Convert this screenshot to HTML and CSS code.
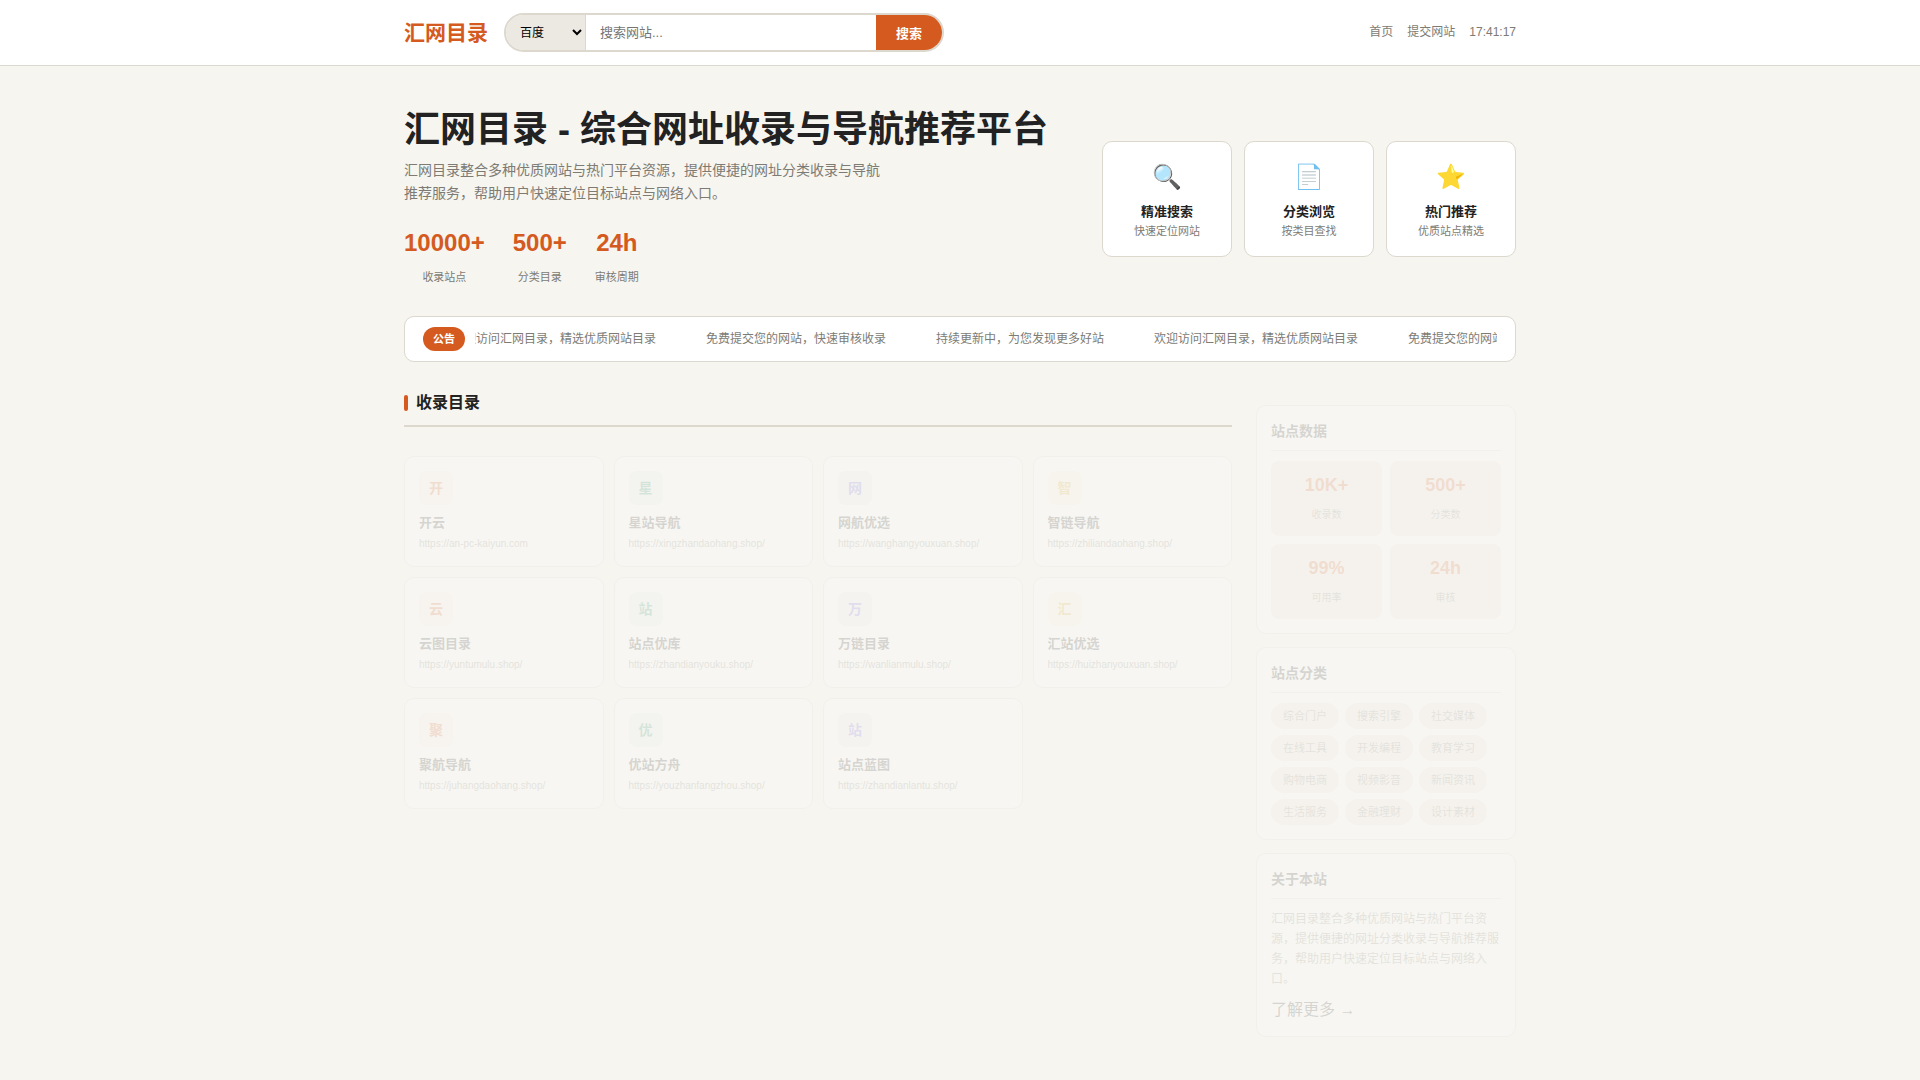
FILE: index.html
```html
<!DOCTYPE html>
<html lang="zh-CN">
<head>
<meta charset="utf-8">
<meta name="viewport" content="width=device-width, initial-scale=1">
<title>汇网目录 - 综合网址收录与导航推荐平台</title>
<link rel="stylesheet" href="styles.css">
</head>
<body>
<header class="site-header">
  <div class="container header-row">
    <a class="logo" href="#">汇网目录</a>
    <form class="search">
      <select class="search-engine" aria-label="搜索引擎">
        <option>百度</option>
        <option>必应</option>
        <option>谷歌</option>
      </select>
      <input class="search-input" type="text" placeholder="搜索网站..." aria-label="搜索网站">
      <button class="search-button" type="submit">搜索</button>
    </form>
    <nav class="top-nav">
      <a href="#">首页</a>
      <a href="#">提交网站</a>
      <span>17:41:17</span>
    </nav>
  </div>
</header>

<main class="container">
  <section class="hero">
    <div class="hero-text">
      <h1>汇网目录 - 综合网址收录与导航推荐平台</h1>
      <p class="hero-desc">汇网目录整合多种优质网站与热门平台资源，提供便捷的网址分类收录与导航推荐服务，帮助用户快速定位目标站点与网络入口。</p>
      <div class="stats">
        <div class="stat"><strong>10000+</strong><span>收录站点</span></div>
        <div class="stat"><strong>500+</strong><span>分类目录</span></div>
        <div class="stat"><strong>24h</strong><span>审核周期</span></div>
      </div>
    </div>
    <div class="features">
      <div class="feature"><span class="feature-icon">🔍</span><h2>精准搜索</h2><p>快速定位网站</p></div>
      <div class="feature"><span class="feature-icon">📄</span><h2>分类浏览</h2><p>按类目查找</p></div>
      <div class="feature"><span class="feature-icon">⭐</span><h2>热门推荐</h2><p>优质站点精选</p></div>
    </div>
  </section>

  <section class="notice">
    <span class="notice-badge">公告</span>
    <div class="notice-window">
      <div class="notice-track">
        <span>欢迎访问汇网目录，精选优质网站目录</span>
        <span>免费提交您的网站，快速审核收录</span>
        <span>持续更新中，为您发现更多好站</span>
        <span>欢迎访问汇网目录，精选优质网站目录</span>
        <span>免费提交您的网站，快速审核收录</span>
      </div>
    </div>
  </section>

  <div class="columns">
    <section class="directory">
      <h2 class="section-title">收录目录</h2>
      <div class="site-grid">
        <a class="site-card" href="#"><span class="site-icon orange">开</span><h3>开云</h3><p>https://an-pc-kaiyun.com</p></a>
        <a class="site-card" href="#"><span class="site-icon green">星</span><h3>星站导航</h3><p>https://xingzhandaohang.shop/</p></a>
        <a class="site-card" href="#"><span class="site-icon purple">网</span><h3>网航优选</h3><p>https://wanghangyouxuan.shop/</p></a>
        <a class="site-card" href="#"><span class="site-icon yellow">智</span><h3>智链导航</h3><p>https://zhiliandaohang.shop/</p></a>
        <a class="site-card" href="#"><span class="site-icon orange">云</span><h3>云图目录</h3><p>https://yuntumulu.shop/</p></a>
        <a class="site-card" href="#"><span class="site-icon green">站</span><h3>站点优库</h3><p>https://zhandianyouku.shop/</p></a>
        <a class="site-card" href="#"><span class="site-icon purple">万</span><h3>万链目录</h3><p>https://wanlianmulu.shop/</p></a>
        <a class="site-card" href="#"><span class="site-icon yellow">汇</span><h3>汇站优选</h3><p>https://huizhanyouxuan.shop/</p></a>
        <a class="site-card" href="#"><span class="site-icon orange">聚</span><h3>聚航导航</h3><p>https://juhangdaohang.shop/</p></a>
        <a class="site-card" href="#"><span class="site-icon green">优</span><h3>优站方舟</h3><p>https://youzhanfangzhou.shop/</p></a>
        <a class="site-card" href="#"><span class="site-icon purple">站</span><h3>站点蓝图</h3><p>https://zhandianlantu.shop/</p></a>
      </div>
    </section>

    <aside class="sidebar">
      <section class="panel">
        <h3 class="panel-title">站点数据</h3>
        <div class="tiles">
          <div class="tile"><strong>10K+</strong><span>收录数</span></div>
          <div class="tile"><strong>500+</strong><span>分类数</span></div>
          <div class="tile"><strong>99%</strong><span>可用率</span></div>
          <div class="tile"><strong>24h</strong><span>审核</span></div>
        </div>
      </section>
      <section class="panel">
        <h3 class="panel-title">站点分类</h3>
        <div class="tags">
          <a href="#">综合门户</a><a href="#">搜索引擎</a><a href="#">社交媒体</a>
          <a href="#">在线工具</a><a href="#">开发编程</a><a href="#">教育学习</a>
          <a href="#">购物电商</a><a href="#">视频影音</a><a href="#">新闻资讯</a>
          <a href="#">生活服务</a><a href="#">金融理财</a><a href="#">设计素材</a>
        </div>
      </section>
      <section class="panel">
        <h3 class="panel-title">关于本站</h3>
        <p class="about">汇网目录整合多种优质网站与热门平台资源，提供便捷的网址分类收录与导航推荐服务，帮助用户快速定位目标站点与网络入口。</p>
        <a class="more" href="#">了解更多 →</a>
      </section>
    </aside>
  </div>
</main>
</body>
</html>
```
FILE: styles.css
```css
:root {
  --bg: #f6f5f0;
  --ink: #222222;
  --muted: #7d7b74;
  --line: #ddd8ce;
  --accent: #d45a20;
  --tint: #f5e6de;
  --faded: 0.15;
}

* {
  box-sizing: border-box;
  margin: 0;
  padding: 0;
}

body {
  background: var(--bg);
  color: var(--ink);
  font-family: "Liberation Sans", "Noto Sans CJK SC", sans-serif;
  font-size: 16px;
  line-height: 26px;
}

a {
  color: inherit;
  text-decoration: none;
}

.container {
  max-width: 1160px;
  margin: 0 auto;
  padding: 0 24px;
}

/* Header */
.site-header {
  background: #ffffff;
  border-bottom: 1px solid var(--line);
}

.header-row {
  display: flex;
  align-items: center;
  gap: 16px;
  padding-top: 13px;
  padding-bottom: 13px;
}

.logo {
  color: var(--accent);
  font-size: 21px;
  font-weight: 700;
}

.search {
  display: flex;
  flex: 0 1 440px;
  height: 39px;
  border: 2px solid var(--line);
  border-radius: 20px;
  overflow: hidden;
}

.search-engine,
.search-input,
.search-button {
  border: 0;
  outline: 0;
  font-family: inherit;
}

.search-engine {
  width: 80px;
  padding: 0 10px;
  border-right: 1px solid var(--line);
  background: #ece9e2;
  color: #000000;
  font-size: 12px;
}

.search-input {
  flex: 1;
  min-width: 0;
  padding: 0 14px;
  background: #ffffff;
  font-size: 13px;
}

.search-button {
  padding: 0 20px;
  background: var(--accent);
  color: #ffffff;
  font-size: 13px;
  font-weight: 700;
}

.top-nav {
  display: flex;
  gap: 14px;
  margin-left: auto;
  color: var(--muted);
  font-size: 12px;
  line-height: 25px;
}

/* Hero */
.hero {
  display: flex;
  align-items: center;
  justify-content: space-between;
  gap: 40px;
  padding: 40px 0 24px;
}

.hero h1 {
  font-size: 36px;
  line-height: 48px;
}

.hero-desc {
  max-width: 480px;
  margin: 5px 0 20px;
  color: var(--muted);
  font-size: 14px;
  line-height: 23px;
}

.stats {
  display: flex;
  gap: 28px;
}

.stat,
.tile {
  display: flex;
  flex-direction: column;
  text-align: center;
}

.stat strong {
  color: var(--accent);
  font-size: 24px;
  line-height: 36px;
}

.stat span {
  margin-top: 1px;
  color: var(--muted);
  font-size: 11px;
  line-height: 30px;
}

.features {
  display: flex;
  gap: 12px;
}

.feature {
  width: 130px;
  padding: 15px 12px;
  border: 1px solid var(--line);
  border-radius: 10px;
  background: #ffffff;
  text-align: center;
}

.feature-icon {
  display: block;
  font-size: 24px;
  line-height: 40px;
}

.feature h2 {
  margin-top: 4px;
  font-size: 13px;
  line-height: 21px;
}

.feature p {
  color: var(--muted);
  font-size: 11px;
  line-height: 19px;
}

/* Notice bar */
.notice {
  display: flex;
  align-items: center;
  gap: 10px;
  padding: 10px 18px;
  border: 1px solid var(--line);
  border-radius: 10px;
  background: #ffffff;
}

.notice-badge {
  flex: none;
  padding: 0 10px;
  border-radius: 12px;
  background: var(--accent);
  color: #ffffff;
  font-size: 11px;
  font-weight: 700;
  line-height: 24px;
}

.notice-window {
  flex: 1;
  min-width: 0;
  overflow: hidden;
}

.notice-track {
  display: flex;
  gap: 50px;
  margin-left: -23px;
  color: var(--muted);
  font-size: 12px;
  line-height: 24px;
  white-space: nowrap;
}

/* Columns */
.columns {
  display: grid;
  grid-template-columns: minmax(0, 1fr) 260px;
  gap: 24px;
  padding: 28px 0 40px;
}

.section-title {
  display: flex;
  align-items: center;
  gap: 8px;
  margin-bottom: 29px;
  padding-bottom: 9px;
  border-bottom: 2px solid var(--line);
  font-size: 16px;
}

.section-title::before {
  content: "";
  width: 4px;
  height: 16px;
  border-radius: 2px;
  background: var(--accent);
}

.site-grid {
  display: grid;
  grid-template-columns: repeat(4, minmax(0, 1fr));
  gap: 10px;
}

.site-card,
.panel {
  padding: 14px;
  border: 1px solid var(--line);
  border-radius: 10px;
  background: #ffffff;
  opacity: var(--faded);
}

.site-icon {
  display: grid;
  place-items: center;
  width: 34px;
  height: 34px;
  margin-bottom: 8px;
  border-radius: 8px;
  font-size: 14px;
  font-weight: 700;
}

.orange {
  background: #fdeee6;
  color: var(--accent);
}

.green {
  background: #e6f2ec;
  color: #1f8a66;
}

.purple {
  background: #f5e8ea;
  color: #6c5ce7;
}

.yellow {
  background: #fdf3e0;
  color: #d9a520;
}

.site-card h3 {
  font-size: 13px;
  line-height: 19px;
}

.site-card p {
  margin-top: 3px;
  color: var(--muted);
  font-size: 10px;
  line-height: 17px;
}

/* Sidebar */
.sidebar {
  display: flex;
  flex-direction: column;
  gap: 13px;
  padding-top: 15px;
}

.panel-title {
  margin-bottom: 10px;
  padding-bottom: 8px;
  border-bottom: 1px solid var(--line);
  font-size: 14px;
  line-height: 22px;
}

.tiles {
  display: grid;
  grid-template-columns: 1fr 1fr;
  gap: 8px;
}

.tile {
  gap: 2px;
  padding: 10px 8px 8px;
  border-radius: 8px;
  background: var(--tint);
}

.tile strong {
  color: var(--accent);
  font-size: 18px;
  line-height: 28px;
}

.tile span {
  color: var(--muted);
  font-size: 10px;
  line-height: 27px;
}

.tags {
  display: flex;
  flex-wrap: wrap;
  gap: 6px;
}

.tags a {
  padding: 0 12px;
  border-radius: 13px;
  background: var(--tint);
  color: var(--muted);
  font-size: 11px;
  line-height: 26px;
}

.about {
  margin-bottom: 8px;
  color: var(--muted);
  font-size: 12px;
  line-height: 20px;
}

.more {
  display: block;
  line-height: 25px;
}
```
